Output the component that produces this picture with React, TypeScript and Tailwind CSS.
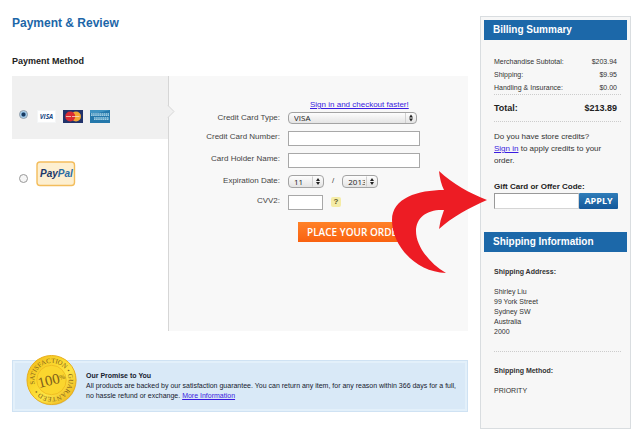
import type { ReactNode } from 'react';

const charges = [
  { label: 'Merchandise Subtotal:', amount: '$203.94' },
  { label: 'Shipping:', amount: '$9.95' },
  { label: 'Handling & Insurance:', amount: '$0.00' },
];

const address = ['Shirley Liu', '99 York Street', 'Sydney SW', 'Australia', '2000'];

function VisaLogo() {
  return (
    <svg width="19" height="13" viewBox="0 0 19 13" role="img" aria-label="Visa">
      <rect x="0.5" y="0.5" width="18" height="12" fill="#fff" stroke="#f4f6f7" />
      <text x="9.5" y="9" textAnchor="middle" fontSize="6.5" fontWeight="bold" fontStyle="italic" fill="#1c4a86" fontFamily="Open Sans, sans-serif">
        VISA
      </text>
    </svg>
  );
}

function MastercardLogo() {
  return (
    <svg width="20" height="13" viewBox="0 0 20 13" role="img" aria-label="MasterCard">
      <rect width="20" height="13" fill="#21336b" />
      <circle cx="13" cy="6.5" r="5" fill="#f3a735" />
      <circle cx="7.2" cy="6.5" r="5" fill="#da2b34" />
      <path d="M3 6.5h5M9 6.5h7.5" stroke="#f9dcc8" strokeWidth="1.2" opacity="0.8" />
    </svg>
  );
}

function AmexLogo() {
  return (
    <svg width="20" height="13" viewBox="0 0 20 13" role="img" aria-label="American Express">
      <rect width="20" height="13" fill="#2478ab" />
      <path d="M0 0h20L8 3H0z" fill="#3f93c1" />
      <path d="M1 4.7h18M4 8.6h15" stroke="#a9d3e6" strokeWidth="2.8" strokeDasharray="1.6 0.5" />
      <path d="M1 4.7h18M4 8.6h15" stroke="#5ba3c9" strokeWidth="0.7" />
    </svg>
  );
}

function PaypalLogo() {
  return (
    <svg width="40" height="26" viewBox="0 0 40 26" role="img" aria-label="PayPal">
      <rect x="1" y="1" width="37.5" height="23.5" rx="3" fill="#fdefd0" stroke="#f3bd5c" strokeWidth="1.4" />
      <text x="4" y="16" fontSize="10" fontWeight="bold" fontStyle="italic" fontFamily="Liberation Sans, sans-serif">
        <tspan fill="#1b3668">Pay</tspan>
        <tspan fill="#2a6ba3">Pal</tspan>
      </text>
    </svg>
  );
}

function Seal() {
  return (
    <svg className="absolute -top-[7px] left-[13px]" width="51" height="52" viewBox="0 0 52 52" role="img" aria-label="100% satisfaction guaranteed">
      <defs>
        <linearGradient id="gold" x1="0" y1="0" x2="1" y2="1">
          <stop offset="0" stopColor="#f0b81c" />
          <stop offset="0.4" stopColor="#fbd92f" />
          <stop offset="0.6" stopColor="#fde445" />
          <stop offset="1" stopColor="#e9a914" />
        </linearGradient>
        <path id="ring" d="M26 43.5a17.5 17.5 0 1 1 0.1 0" />
      </defs>
      <circle cx="26.5" cy="26.8" r="25" fill="#b9bfae" opacity="0.6" />
      <circle cx="26" cy="26" r="25" fill="url(#gold)" stroke="#e8ad1c" />
      <circle cx="26" cy="26" r="15" fill="#fbd62e" stroke="#f0bd22" />
      <g fill="#80601a" fontFamily="Liberation Serif, serif">
        <text fontSize="6.8" transform="rotate(76 26 26)">
          <textPath href="#ring">SATISFACTION • GUARANTEED •</textPath>
        </text>
        <text x="26" y="31" textAnchor="middle" fontSize="15" transform="rotate(-14 26 26)">
          100<tspan fontSize="7" dy="-3">%</tspan>
        </text>
      </g>
    </svg>
  );
}

function CurvedArrow() {
  return (
    <svg className="pointer-events-none absolute -top-[22px] -left-[103px]" width="97" height="103" viewBox="0 0 97 103" aria-hidden="true">
      <path
        d="M96 29C78 22 62 13 48 0Q49 11 53 19C27 19 1 27 1 49C1 75 25 101 55 102C38 92 25 75 25 60C25 46 37 38 53 39Q49 49 48 58C61 46 78 37 96 29Z"
        fill="#ed1c24"
      />
    </svg>
  );
}

interface PickerProps {
  id: string;
  label?: string;
  options: string[];
  className: string;
}

function Picker({ id, label, options, className }: PickerProps) {
  return (
    <span className={`relative flex ${className}`}>
      <select
        id={id}
        aria-label={label}
        className="h-full w-full appearance-none rounded-[4px] border border-[#a3a3a3] bg-linear-to-b from-[#fdfdfd] to-[#e4e4e4] pr-3 pl-[5px] font-['Open_Sans',sans-serif] text-[8px] leading-[10px] text-[#222]"
      >
        {options.map((o) => (
          <option key={o}>{o}</option>
        ))}
      </select>
      <svg className="pointer-events-none absolute top-0 right-0 h-full w-3" viewBox="0 0 12 12" aria-hidden="true">
        <path d="M0.5 1v10" stroke="#cfcfcf" />
        <path d="M6 2.6l2 2.8H4zM6 9.4l2-2.8H4z" fill="#222" />
      </svg>
    </span>
  );
}

function Field({ id, label, children }: { id: string; label: string; children: ReactNode }) {
  return (
    <div className="flex items-start gap-2">
      <label htmlFor={id} className="w-[111px] shrink-0 text-right leading-3">
        {label}
      </label>
      {children}
    </div>
  );
}

function SideHeading({ children }: { children: ReactNode }) {
  return <h2 className="bg-[#1c68a9] pl-[9px] text-[10px] leading-5 font-bold text-white">{children}</h2>;
}

export default function App() {
  return (
    <div className="flex items-start gap-3 bg-white pr-[9px] pb-[6px] pl-3 font-['Liberation_Sans',Arial,sans-serif] text-[7px] text-[#333]">
      <main className="min-w-0 flex-1 pt-[15px]">
        <h1 className="text-[12px] leading-4 font-bold text-[#1c66a8]">Payment &amp; Review</h1>
        <h2 className="mt-6 text-[9px] leading-3 font-bold text-[#222]">Payment Method</h2>

        <div className="mt-[9px] flex">
          <div className="w-[157px] shrink-0 border-r border-[#d6d6d6]">
            <label className="relative flex h-[63px] items-center gap-[7px] bg-[#f0f0f0] pt-[18px] pl-[7px]">
              <input
                type="radio"
                name="method"
                defaultChecked
                aria-label="Credit card"
                className="mr-[2px] -mt-1 size-[9px] appearance-none rounded-full border border-[#8a9aa8] bg-[#e4eff8] checked:bg-[radial-gradient(circle,#16385f_0_1.5px,#8fc0e6_2.5px,#dcebf7_4px)]"
              />
              <VisaLogo />
              <MastercardLogo />
              <AmexLogo />
              <svg className="absolute top-[29px] -right-[7px]" width="8" height="13" viewBox="0 0 8 13" aria-hidden="true">
                <path d="M0 0.5h1L7 6.5l-6 6H0z" fill="#f0f0f0" />
                <path d="M1 0.5L7 6.5l-6 6" fill="none" stroke="#d6d6d6" />
              </svg>
            </label>
            <label className="flex items-end gap-2 pt-[22px] pl-[7px]">
              <input
                type="radio"
                name="method"
                aria-label="PayPal"
                className="mb-1 size-[9px] appearance-none rounded-full border border-[#999] bg-[#f6f6f6] checked:bg-[radial-gradient(circle,#16385f_0_1.5px,#8fc0e6_2.5px,#dcebf7_4px)]"
              />
              <PaypalLogo />
            </label>
          </div>

          <form className="flex flex-1 flex-col gap-[7px] bg-[#f8f8f8] pt-[22px] pb-[89px] text-[8px] text-[#444]">
            <a href="#signin" className="-mb-[7px] ml-[141px] self-start text-[8px] leading-[14px] text-[#3a1be0] underline">
              Sign in and checkout faster!
            </a>
            <Field id="type" label="Credit Card Type:">
              <Picker id="type" options={['VISA', 'MasterCard', 'American Express']} className="h-3 w-[129px]" />
            </Field>
            <Field id="number" label="Credit Card Number:">
              <input id="number" type="text" className="h-[15px] w-[132px] border border-[#a8a8a8] bg-white px-1" />
            </Field>
            <Field id="holder" label="Card Holder Name:">
              <input id="holder" type="text" className="h-[15px] w-[132px] border border-[#a8a8a8] bg-white px-1" />
            </Field>
            <Field id="month" label="Expiration Date:">
              <Picker id="month" options={['11', '12']} className="h-[13px] w-9" />
              <span className="leading-3">/</span>
              <Picker id="year" label="Expiration year" options={['2013', '2014']} className="h-[13px] w-9" />
            </Field>
            <Field id="cvv" label="CVV2:">
              <input id="cvv" type="text" className="h-[15px] w-[35px] border border-[#a8a8a8] bg-white px-1" />
              <button type="button" aria-label="What is CVV2?" className="mt-[2px] size-[10px] rounded-[2px] bg-[#f5eca6] text-[8px] leading-[10px] font-bold text-[#5b5428]">
                ?
              </button>
            </Field>
            <button
              type="button"
              className="mt-[5px] ml-[129px] h-5 w-[112px] self-start bg-linear-to-b from-[#ff8127] to-[#f9610f] pl-[9px] text-left font-['Open_Sans',sans-serif] text-[10px] leading-5 font-semibold whitespace-nowrap text-white"
            >
              PLACE YOUR ORDER
            </button>
          </form>
        </div>

        <section className="relative mt-[29px] border border-[#cfe2f3] bg-[#d9e9f7]">
          <div className="border-2 border-[#e3f0fa] py-2 pr-1 pl-[71px] leading-[10px] text-[#15202e]">
            <h3 className="font-bold">Our Promise to You</h3>
            <p>
              All products are backed by our satisfaction guarantee. You can return any item, for any reason within 366 days for a full, no hassle refund or
              exchange.{' '}
              <a href="#more" className="text-[#3a1be0] underline">
                More Information
              </a>
            </p>
          </div>
          <Seal />
        </section>
      </main>

      <aside className="mt-4 w-[151px] shrink-0 border border-[#d9dde0] bg-[#f7f7f7] p-[3px]">
        <SideHeading>Billing Summary</SideHeading>
        <div className="pt-[15px] pr-[6px] pb-[23px] pl-[10px]">
          <dl>
            {charges.map((c) => (
              <div key={c.label} className="flex justify-between pr-1 leading-[13px]">
                <dt>{c.label}</dt>
                <dd>{c.amount}</dd>
              </div>
            ))}
            <div className="flex justify-between border-y border-dotted border-[#ccc] pr-1 text-[9px] leading-[26px] font-bold text-[#222]">
              <dt>Total:</dt>
              <dd>{'$213.89'}</dd>
            </div>
          </dl>
          <p className="mt-[9px] pr-3 text-[8px] leading-3">
            Do you have store credits?
            <br />
            <a href="#signin" className="text-[#3a1be0] underline">
              Sign in
            </a>{' '}
            to apply credits to your order.
          </p>
          <label htmlFor="gift" className="mt-[14px] block text-[8px] leading-3 font-bold text-[#222]">
            Gift Card or Offer Code:
          </label>
          <div className="relative flex pr-[3px]">
            <input id="gift" type="text" className="h-4 min-w-0 flex-1 border border-[#d5d5d5] border-t-[#999] border-l-[#999] bg-white px-1" />
            <button type="button" className="h-4 w-[39px] rounded-[1px] bg-linear-to-b from-[#2f7db9] to-[#14589a] font-['Open_Sans',sans-serif] text-[9px] leading-4 font-bold text-white">
              APPLY
            </button>
            <CurvedArrow />
          </div>
        </div>

        <SideHeading>Shipping Information</SideHeading>
        <div className="pt-[15px] pr-[6px] pb-[29px] pl-[10px] leading-[10px]">
          <h3 className="font-bold">Shipping Address:</h3>
          <address className="mt-[10px] border-b border-dotted border-[#ccc] pb-[14px] not-italic">
            {address.map((line) => (
              <div key={line}>{line}</div>
            ))}
          </address>
          <h3 className="mt-[14px] font-bold">Shipping Method:</h3>
          <p className="mt-[10px]">PRIORITY</p>
        </div>
      </aside>
    </div>
  );
}
